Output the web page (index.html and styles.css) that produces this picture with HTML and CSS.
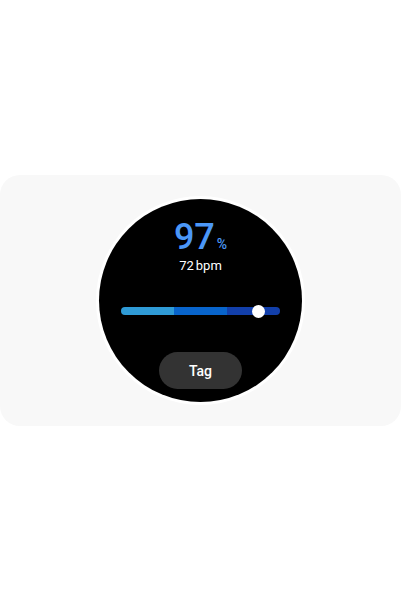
FILE: index.html
```html
<!DOCTYPE html>
<html lang="en">
<head>
  <meta charset="utf-8">
  <meta name="viewport" content="width=device-width, initial-scale=1">
  <title>Blood oxygen</title>
  <link rel="stylesheet" href="styles.css">
</head>
<body>
  <main class="panel">
    <!-- Watch face -->
    <div class="watch">
      <div class="oxygen">
        <span class="value">97</span>
        <span class="unit">%</span>
      </div>
      <div class="pulse">
        <span>72</span>
        <span>bpm</span>
      </div>
      <input class="level" type="range" min="0" max="100" value="90" aria-label="Oxygen level">
      <button class="tag-button" type="button">Tag</button>
    </div>
  </main>
</body>
</html>
```

FILE: styles.css
```css
* {
  box-sizing: border-box;
}
body {
  margin: 0;
  min-height: 100vh;
  display: flex;
  align-items: center;
  background-color: #fff;
  font-family: Roboto, "Liberation Sans", sans-serif;
}
.panel {
  flex: 1;
  display: flex;
  justify-content: center;
  padding: 24px;
  border-radius: 20px;
  background-color: #f8f8f8;
}
/* Round watch screen */
.watch {
  display: flex;
  flex-direction: column;
  align-items: center;
  width: 203px;
  aspect-ratio: 1;
  padding: 19px 22px 13px;
  border-radius: 50%;
  background-color: #000;
  box-shadow: 0 0 0 3px #fff;
}
.oxygen {
  display: flex;
  align-items: baseline;
  gap: 2px;
  color: #4b97f7;
}
.value {
  font-size: 36px;
  font-weight: 500;
  line-height: 39px;
}
.unit {
  font-size: 14px;
  font-weight: 500;
}
.pulse {
  display: flex;
  gap: 2px;
  color: #fff;
  font-size: 13px;
  line-height: 18px;
}
/* Slider with three ranges: low, medium, high */
.level {
  appearance: none;
  width: 100%;
  height: 8px;
  margin: 32px 0 0;
  border-radius: 4px;
  background: linear-gradient(to right, #2f9bd6 33.3%, #0864cb 33.3% 66.6%, #123faa 66.6%);
  cursor: pointer;
}
.level::-webkit-slider-thumb {
  appearance: none;
  width: 13px;
  height: 13px;
  border-radius: 50%;
  background-color: #fff;
}
.tag-button {
  width: 83px;
  height: 37px;
  margin-top: auto;
  border: none;
  border-radius: 19px;
  background-color: #333;
  color: #fff;
  font-family: inherit;
  font-size: 14px;
  font-weight: 500;
  cursor: pointer;
}
```
